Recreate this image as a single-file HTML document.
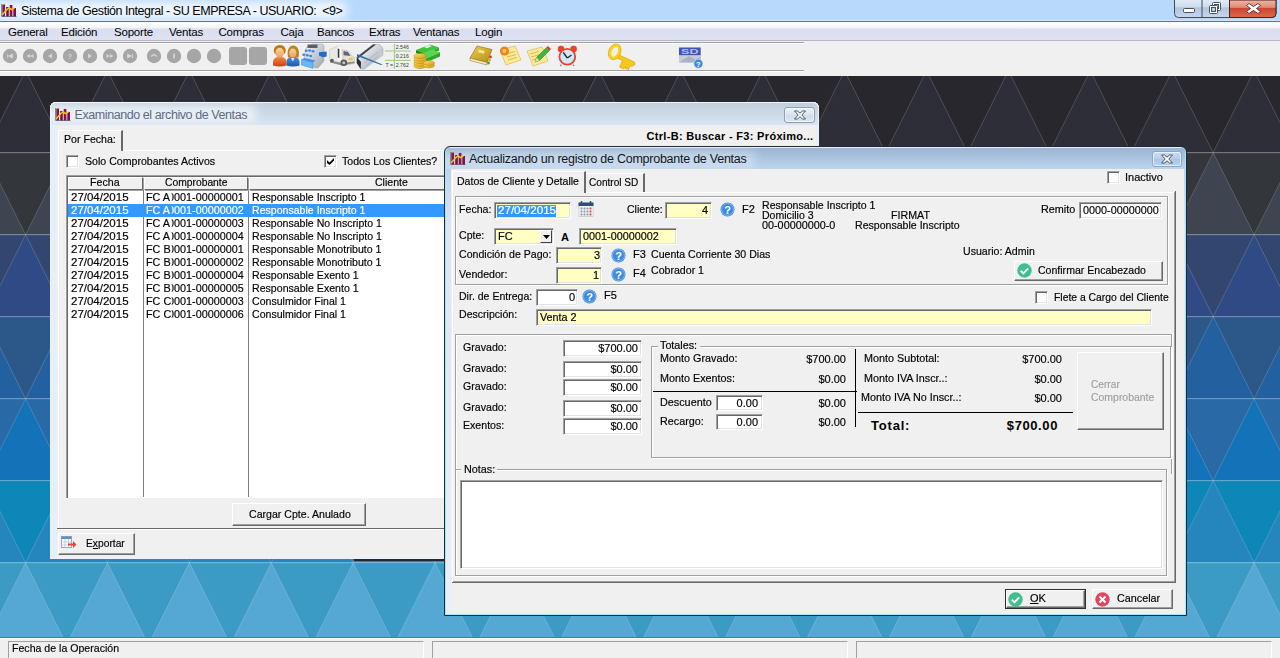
<!DOCTYPE html>
<html lang="es"><head><meta charset="utf-8"><title>Sistema de Gestión Integral</title>
<style>
html,body{margin:0;padding:0;}
body{width:1280px;height:658px;overflow:hidden;position:relative;background:#f0f0f0;font-family:"Liberation Sans",sans-serif;font-size:11px;}
div,.abs,.t{position:absolute;}
.t{white-space:nowrap;}
u{text-decoration:underline;}
</style></head><body>

<svg class="abs" style="left:0;top:76px" width="1280" height="561" viewBox="0 76 1280 561"><rect x="0" y="70.7" width="1280" height="82" fill="#27272d"/><path d="M-56.3 70.7L-15.4 152.7L-97.2 152.7ZM25.6 70.7L66.6 152.7L-15.4 152.7ZM107.5 70.7L148.4 152.7L66.5 152.7ZM189.4 70.7L230.4 152.7L148.4 152.7ZM271.3 70.7L312.2 152.7L230.4 152.7ZM353.2 70.7L394.2 152.7L312.3 152.7ZM435.1 70.7L476.1 152.7L394.2 152.7ZM517.0 70.7L558.0 152.7L476.1 152.7ZM598.9 70.7L639.9 152.7L558.0 152.7ZM680.8 70.7L721.8 152.7L639.9 152.7ZM762.7 70.7L803.7 152.7L721.8 152.7ZM844.6 70.7L885.6 152.7L803.6 152.7ZM926.5 70.7L967.5 152.7L885.6 152.7ZM1008.4 70.7L1049.4 152.7L967.5 152.7ZM1090.3 70.7L1131.2 152.7L1049.3 152.7ZM1172.2 70.7L1213.2 152.7L1131.2 152.7ZM1254.1 70.7L1295.0 152.7L1213.1 152.7Z" fill="#2e2e38"/><path d="M-56.3 70.7L-15.4 152.7L-97.2 152.7ZM25.6 70.7L66.6 152.7L-15.4 152.7ZM107.5 70.7L148.4 152.7L66.5 152.7ZM189.4 70.7L230.4 152.7L148.4 152.7ZM271.3 70.7L312.2 152.7L230.4 152.7ZM353.2 70.7L394.2 152.7L312.3 152.7ZM435.1 70.7L476.1 152.7L394.2 152.7ZM517.0 70.7L558.0 152.7L476.1 152.7ZM598.9 70.7L639.9 152.7L558.0 152.7ZM680.8 70.7L721.8 152.7L639.9 152.7ZM762.7 70.7L803.7 152.7L721.8 152.7ZM844.6 70.7L885.6 152.7L803.6 152.7ZM926.5 70.7L967.5 152.7L885.6 152.7ZM1008.4 70.7L1049.4 152.7L967.5 152.7ZM1090.3 70.7L1131.2 152.7L1049.3 152.7ZM1172.2 70.7L1213.2 152.7L1131.2 152.7ZM1254.1 70.7L1295.0 152.7L1213.1 152.7Z" fill="none" stroke="#fff" stroke-opacity="0.17" stroke-width="1"/><rect x="0" y="152.7" width="1280" height="82" fill="#33363b"/><path d="M-15.3 152.7L25.6 234.7L-56.3 234.7ZM66.6 152.7L107.5 234.7L25.6 234.7ZM148.5 152.7L189.4 234.7L107.5 234.7ZM230.4 152.7L271.3 234.7L189.4 234.7ZM312.2 152.7L353.2 234.7L271.3 234.7ZM394.2 152.7L435.1 234.7L353.2 234.7ZM476.1 152.7L517.0 234.7L435.1 234.7ZM558.0 152.7L598.9 234.7L517.0 234.7ZM639.9 152.7L680.8 234.7L598.9 234.7ZM721.8 152.7L762.7 234.7L680.8 234.7ZM803.7 152.7L844.6 234.7L762.7 234.7ZM885.5 152.7L926.5 234.7L844.6 234.7ZM967.5 152.7L1008.4 234.7L926.5 234.7ZM1049.4 152.7L1090.3 234.7L1008.4 234.7ZM1131.2 152.7L1172.2 234.7L1090.3 234.7ZM1213.2 152.7L1254.1 234.7L1172.2 234.7ZM1295.0 152.7L1336.0 234.7L1254.1 234.7Z" fill="#3e4551"/><path d="M-15.3 152.7L25.6 234.7L-56.3 234.7ZM66.6 152.7L107.5 234.7L25.6 234.7ZM148.5 152.7L189.4 234.7L107.5 234.7ZM230.4 152.7L271.3 234.7L189.4 234.7ZM312.2 152.7L353.2 234.7L271.3 234.7ZM394.2 152.7L435.1 234.7L353.2 234.7ZM476.1 152.7L517.0 234.7L435.1 234.7ZM558.0 152.7L598.9 234.7L517.0 234.7ZM639.9 152.7L680.8 234.7L598.9 234.7ZM721.8 152.7L762.7 234.7L680.8 234.7ZM803.7 152.7L844.6 234.7L762.7 234.7ZM885.5 152.7L926.5 234.7L844.6 234.7ZM967.5 152.7L1008.4 234.7L926.5 234.7ZM1049.4 152.7L1090.3 234.7L1008.4 234.7ZM1131.2 152.7L1172.2 234.7L1090.3 234.7ZM1213.2 152.7L1254.1 234.7L1172.2 234.7ZM1295.0 152.7L1336.0 234.7L1254.1 234.7Z" fill="none" stroke="#fff" stroke-opacity="0.17" stroke-width="1"/><rect x="0" y="234.7" width="1280" height="82" fill="#33466f"/><path d="M-56.3 234.7L-15.4 316.7L-97.2 316.7ZM25.6 234.7L66.6 316.7L-15.4 316.7ZM107.5 234.7L148.4 316.7L66.5 316.7ZM189.4 234.7L230.4 316.7L148.4 316.7ZM271.3 234.7L312.2 316.7L230.4 316.7ZM353.2 234.7L394.2 316.7L312.3 316.7ZM435.1 234.7L476.1 316.7L394.2 316.7ZM517.0 234.7L558.0 316.7L476.1 316.7ZM598.9 234.7L639.9 316.7L558.0 316.7ZM680.8 234.7L721.8 316.7L639.9 316.7ZM762.7 234.7L803.7 316.7L721.8 316.7ZM844.6 234.7L885.6 316.7L803.6 316.7ZM926.5 234.7L967.5 316.7L885.6 316.7ZM1008.4 234.7L1049.4 316.7L967.5 316.7ZM1090.3 234.7L1131.2 316.7L1049.3 316.7ZM1172.2 234.7L1213.2 316.7L1131.2 316.7ZM1254.1 234.7L1295.0 316.7L1213.1 316.7Z" fill="#2f4a85"/><path d="M-56.3 234.7L-15.4 316.7L-97.2 316.7ZM25.6 234.7L66.6 316.7L-15.4 316.7ZM107.5 234.7L148.4 316.7L66.5 316.7ZM189.4 234.7L230.4 316.7L148.4 316.7ZM271.3 234.7L312.2 316.7L230.4 316.7ZM353.2 234.7L394.2 316.7L312.3 316.7ZM435.1 234.7L476.1 316.7L394.2 316.7ZM517.0 234.7L558.0 316.7L476.1 316.7ZM598.9 234.7L639.9 316.7L558.0 316.7ZM680.8 234.7L721.8 316.7L639.9 316.7ZM762.7 234.7L803.7 316.7L721.8 316.7ZM844.6 234.7L885.6 316.7L803.6 316.7ZM926.5 234.7L967.5 316.7L885.6 316.7ZM1008.4 234.7L1049.4 316.7L967.5 316.7ZM1090.3 234.7L1131.2 316.7L1049.3 316.7ZM1172.2 234.7L1213.2 316.7L1131.2 316.7ZM1254.1 234.7L1295.0 316.7L1213.1 316.7Z" fill="none" stroke="#fff" stroke-opacity="0.17" stroke-width="1"/><rect x="0" y="316.7" width="1280" height="82" fill="#2b5789"/><path d="M-15.3 316.7L25.6 398.7L-56.3 398.7ZM66.6 316.7L107.5 398.7L25.6 398.7ZM148.5 316.7L189.4 398.7L107.5 398.7ZM230.4 316.7L271.3 398.7L189.4 398.7ZM312.2 316.7L353.2 398.7L271.3 398.7ZM394.2 316.7L435.1 398.7L353.2 398.7ZM476.1 316.7L517.0 398.7L435.1 398.7ZM558.0 316.7L598.9 398.7L517.0 398.7ZM639.9 316.7L680.8 398.7L598.9 398.7ZM721.8 316.7L762.7 398.7L680.8 398.7ZM803.7 316.7L844.6 398.7L762.7 398.7ZM885.5 316.7L926.5 398.7L844.6 398.7ZM967.5 316.7L1008.4 398.7L926.5 398.7ZM1049.4 316.7L1090.3 398.7L1008.4 398.7ZM1131.2 316.7L1172.2 398.7L1090.3 398.7ZM1213.2 316.7L1254.1 398.7L1172.2 398.7ZM1295.0 316.7L1336.0 398.7L1254.1 398.7Z" fill="#22609f"/><path d="M-15.3 316.7L25.6 398.7L-56.3 398.7ZM66.6 316.7L107.5 398.7L25.6 398.7ZM148.5 316.7L189.4 398.7L107.5 398.7ZM230.4 316.7L271.3 398.7L189.4 398.7ZM312.2 316.7L353.2 398.7L271.3 398.7ZM394.2 316.7L435.1 398.7L353.2 398.7ZM476.1 316.7L517.0 398.7L435.1 398.7ZM558.0 316.7L598.9 398.7L517.0 398.7ZM639.9 316.7L680.8 398.7L598.9 398.7ZM721.8 316.7L762.7 398.7L680.8 398.7ZM803.7 316.7L844.6 398.7L762.7 398.7ZM885.5 316.7L926.5 398.7L844.6 398.7ZM967.5 316.7L1008.4 398.7L926.5 398.7ZM1049.4 316.7L1090.3 398.7L1008.4 398.7ZM1131.2 316.7L1172.2 398.7L1090.3 398.7ZM1213.2 316.7L1254.1 398.7L1172.2 398.7ZM1295.0 316.7L1336.0 398.7L1254.1 398.7Z" fill="none" stroke="#fff" stroke-opacity="0.17" stroke-width="1"/><rect x="0" y="398.7" width="1280" height="82" fill="#2969a5"/><path d="M-56.3 398.7L-15.4 480.7L-97.2 480.7ZM25.6 398.7L66.6 480.7L-15.4 480.7ZM107.5 398.7L148.4 480.7L66.5 480.7ZM189.4 398.7L230.4 480.7L148.4 480.7ZM271.3 398.7L312.2 480.7L230.4 480.7ZM353.2 398.7L394.2 480.7L312.3 480.7ZM435.1 398.7L476.1 480.7L394.2 480.7ZM517.0 398.7L558.0 480.7L476.1 480.7ZM598.9 398.7L639.9 480.7L558.0 480.7ZM680.8 398.7L721.8 480.7L639.9 480.7ZM762.7 398.7L803.7 480.7L721.8 480.7ZM844.6 398.7L885.6 480.7L803.6 480.7ZM926.5 398.7L967.5 480.7L885.6 480.7ZM1008.4 398.7L1049.4 480.7L967.5 480.7ZM1090.3 398.7L1131.2 480.7L1049.3 480.7ZM1172.2 398.7L1213.2 480.7L1131.2 480.7ZM1254.1 398.7L1295.0 480.7L1213.1 480.7Z" fill="#1372b8"/><path d="M-56.3 398.7L-15.4 480.7L-97.2 480.7ZM25.6 398.7L66.6 480.7L-15.4 480.7ZM107.5 398.7L148.4 480.7L66.5 480.7ZM189.4 398.7L230.4 480.7L148.4 480.7ZM271.3 398.7L312.2 480.7L230.4 480.7ZM353.2 398.7L394.2 480.7L312.3 480.7ZM435.1 398.7L476.1 480.7L394.2 480.7ZM517.0 398.7L558.0 480.7L476.1 480.7ZM598.9 398.7L639.9 480.7L558.0 480.7ZM680.8 398.7L721.8 480.7L639.9 480.7ZM762.7 398.7L803.7 480.7L721.8 480.7ZM844.6 398.7L885.6 480.7L803.6 480.7ZM926.5 398.7L967.5 480.7L885.6 480.7ZM1008.4 398.7L1049.4 480.7L967.5 480.7ZM1090.3 398.7L1131.2 480.7L1049.3 480.7ZM1172.2 398.7L1213.2 480.7L1131.2 480.7ZM1254.1 398.7L1295.0 480.7L1213.1 480.7Z" fill="none" stroke="#fff" stroke-opacity="0.17" stroke-width="1"/><rect x="0" y="480.7" width="1280" height="82" fill="#0f86b8"/><path d="M-15.3 480.7L25.6 562.7L-56.3 562.7ZM66.6 480.7L107.5 562.7L25.6 562.7ZM148.5 480.7L189.4 562.7L107.5 562.7ZM230.4 480.7L271.3 562.7L189.4 562.7ZM312.2 480.7L353.2 562.7L271.3 562.7ZM394.2 480.7L435.1 562.7L353.2 562.7ZM476.1 480.7L517.0 562.7L435.1 562.7ZM558.0 480.7L598.9 562.7L517.0 562.7ZM639.9 480.7L680.8 562.7L598.9 562.7ZM721.8 480.7L762.7 562.7L680.8 562.7ZM803.7 480.7L844.6 562.7L762.7 562.7ZM885.5 480.7L926.5 562.7L844.6 562.7ZM967.5 480.7L1008.4 562.7L926.5 562.7ZM1049.4 480.7L1090.3 562.7L1008.4 562.7ZM1131.2 480.7L1172.2 562.7L1090.3 562.7ZM1213.2 480.7L1254.1 562.7L1172.2 562.7ZM1295.0 480.7L1336.0 562.7L1254.1 562.7Z" fill="#2585bd"/><path d="M-15.3 480.7L25.6 562.7L-56.3 562.7ZM66.6 480.7L107.5 562.7L25.6 562.7ZM148.5 480.7L189.4 562.7L107.5 562.7ZM230.4 480.7L271.3 562.7L189.4 562.7ZM312.2 480.7L353.2 562.7L271.3 562.7ZM394.2 480.7L435.1 562.7L353.2 562.7ZM476.1 480.7L517.0 562.7L435.1 562.7ZM558.0 480.7L598.9 562.7L517.0 562.7ZM639.9 480.7L680.8 562.7L598.9 562.7ZM721.8 480.7L762.7 562.7L680.8 562.7ZM803.7 480.7L844.6 562.7L762.7 562.7ZM885.5 480.7L926.5 562.7L844.6 562.7ZM967.5 480.7L1008.4 562.7L926.5 562.7ZM1049.4 480.7L1090.3 562.7L1008.4 562.7ZM1131.2 480.7L1172.2 562.7L1090.3 562.7ZM1213.2 480.7L1254.1 562.7L1172.2 562.7ZM1295.0 480.7L1336.0 562.7L1254.1 562.7Z" fill="none" stroke="#fff" stroke-opacity="0.17" stroke-width="1"/><rect x="0" y="562.7" width="1280" height="82" fill="#3c9bc5"/><path d="M-56.3 562.7L-15.4 644.7L-97.2 644.7ZM25.6 562.7L66.6 644.7L-15.4 644.7ZM107.5 562.7L148.4 644.7L66.5 644.7ZM189.4 562.7L230.4 644.7L148.4 644.7ZM271.3 562.7L312.2 644.7L230.4 644.7ZM353.2 562.7L394.2 644.7L312.3 644.7ZM435.1 562.7L476.1 644.7L394.2 644.7ZM517.0 562.7L558.0 644.7L476.1 644.7ZM598.9 562.7L639.9 644.7L558.0 644.7ZM680.8 562.7L721.8 644.7L639.9 644.7ZM762.7 562.7L803.7 644.7L721.8 644.7ZM844.6 562.7L885.6 644.7L803.6 644.7ZM926.5 562.7L967.5 644.7L885.6 644.7ZM1008.4 562.7L1049.4 644.7L967.5 644.7ZM1090.3 562.7L1131.2 644.7L1049.3 644.7ZM1172.2 562.7L1213.2 644.7L1131.2 644.7ZM1254.1 562.7L1295.0 644.7L1213.1 644.7Z" fill="#55a8d4"/><path d="M-56.3 562.7L-15.4 644.7L-97.2 644.7ZM25.6 562.7L66.6 644.7L-15.4 644.7ZM107.5 562.7L148.4 644.7L66.5 644.7ZM189.4 562.7L230.4 644.7L148.4 644.7ZM271.3 562.7L312.2 644.7L230.4 644.7ZM353.2 562.7L394.2 644.7L312.3 644.7ZM435.1 562.7L476.1 644.7L394.2 644.7ZM517.0 562.7L558.0 644.7L476.1 644.7ZM598.9 562.7L639.9 644.7L558.0 644.7ZM680.8 562.7L721.8 644.7L639.9 644.7ZM762.7 562.7L803.7 644.7L721.8 644.7ZM844.6 562.7L885.6 644.7L803.6 644.7ZM926.5 562.7L967.5 644.7L885.6 644.7ZM1008.4 562.7L1049.4 644.7L967.5 644.7ZM1090.3 562.7L1131.2 644.7L1049.3 644.7ZM1172.2 562.7L1213.2 644.7L1131.2 644.7ZM1254.1 562.7L1295.0 644.7L1213.1 644.7Z" fill="none" stroke="#fff" stroke-opacity="0.17" stroke-width="1"/><path d="M0 152.7H1280" stroke="#fff" stroke-opacity="0.3" stroke-width="1"/><path d="M0 234.7H1280" stroke="#fff" stroke-opacity="0.3" stroke-width="1"/><path d="M0 316.7H1280" stroke="#fff" stroke-opacity="0.3" stroke-width="1"/><path d="M0 398.7H1280" stroke="#fff" stroke-opacity="0.3" stroke-width="1"/><path d="M0 480.7H1280" stroke="#fff" stroke-opacity="0.3" stroke-width="1"/><path d="M0 562.7H1280" stroke="#fff" stroke-opacity="0.3" stroke-width="1"/></svg>
<div style="left:0px;top:0px;width:1280px;height:21px;background:#b9d9fb;overflow:hidden;box-shadow:inset 0 -1px 0 #d6e6f8;"><div style="left:-12px;top:2px;width:358px;height:17px;background:rgba(255,255,255,.8);filter:blur(5px);"></div></div>
<div style="left:0px;top:21px;width:1280px;height:1px;background:#66717f;"></div>
<svg class="abs" style="left:1px;top:4px" width="16" height="14" viewBox="0 0 16 14">
<path d="M0.500 0V12.500H15.500" stroke="#7d8c94" stroke-width="1" fill="none"/>
<rect x="1.300" y="0.500" width="2.700" height="12" fill="#8a163e"/><rect x="5.200" y="3" width="2.600" height="9.500" fill="#7a1238"/><rect x="8.700" y="1" width="2.700" height="11.500" fill="#8a163e"/><rect x="12.300" y="4" width="2.700" height="8.500" fill="#7a1446"/>
<path d="M1 11L5 6.500 8 3.800 10.500 5.500 13.500 3.800" stroke="#f2c230" stroke-width="1.500" fill="none"/></svg>
<span class="t" style="top:4.17px;font-size:12.5px;line-height:15px;color:#000;left:21px;letter-spacing:-0.45px;">Sistema de Gestión Integral - SU EMPRESA - USUARIO:&nbsp; &lt;9&gt;</span>
<svg class="abs" style="left:1173px;top:0" width="106" height="19" viewBox="0 0 106 19">
<defs><linearGradient id="wb" x1="0" y1="0" x2="0" y2="1"><stop offset="0" stop-color="#e3ecf7"/><stop offset="0.42" stop-color="#cfdcec"/><stop offset="0.48" stop-color="#b2c5dd"/><stop offset="1" stop-color="#c6d7ec"/></linearGradient>
<linearGradient id="wr" x1="0" y1="0" x2="0" y2="1"><stop offset="0" stop-color="#f0b4a6"/><stop offset="0.42" stop-color="#e08a78"/><stop offset="0.48" stop-color="#cc4630"/><stop offset="1" stop-color="#dc6a4c"/></linearGradient></defs>
<path d="M1.500 -1V13.500a4 4 0 0 0 4 4H99a4 4 0 0 0 4-4V-1Z" fill="url(#wb)" stroke="#3f4a58" />
<path d="M56.500 0V17.500H99a4 4 0 0 0 4-4V0Z" fill="url(#wr)" stroke="#43201c"/>
<path d="M29 0V17.500" stroke="#3f4a58"/>
<rect x="10.500" y="8.500" width="11" height="4" rx="1" fill="#fff" stroke="#47535f"/>
<rect x="39.500" y="2.500" width="8" height="8" rx="1" fill="#fff" stroke="#47535f"/><rect x="41.500" y="4.500" width="4" height="4" fill="#b9cbe0" stroke="#47535f"/>
<rect x="36.500" y="5.500" width="8" height="8" rx="1" fill="#fff" stroke="#47535f"/><rect x="38.500" y="7.500" width="4" height="4" fill="#b9cbe0" stroke="#47535f"/>
<path d="M76 3.500l4.500 3 4.500-3 2.500 2-4 3 4 3-2.500 2-4.500-3-4.500 3-2.500-2 4-3-4-3z" fill="#fff" stroke="#5a2a24" stroke-width="0.900"/>
</svg>
<div style="left:0px;top:22px;width:1280px;height:18px;background:linear-gradient(#ffffff 0,#f4f5fa 30%,#e6e8f3 36%,#dbdeee 42%,#dfe2f2 100%);"></div>
<div style="left:0px;top:40px;width:1280px;height:1px;background:#b4b7c2;"></div>
<div style="left:0px;top:41px;width:1280px;height:35px;background:#f0f0f0;"></div>
<div style="left:0px;top:42px;width:804px;height:1px;background:#a0a0a0;"></div>
<div style="left:0px;top:43px;width:804px;height:1px;background:#fff;"></div>
<div style="left:0px;top:70px;width:804px;height:1px;background:#a0a0a0;"></div>
<div style="left:0px;top:71px;width:804px;height:1px;background:#fff;"></div>
<span class="t" style="top:25.02px;font-size:11.5px;line-height:14px;color:#000;left:8px;letter-spacing:-0.2px;">General</span>
<span class="t" style="top:25.02px;font-size:11.5px;line-height:14px;color:#000;left:61px;letter-spacing:-0.2px;">Edición</span>
<span class="t" style="top:25.02px;font-size:11.5px;line-height:14px;color:#000;left:114px;letter-spacing:-0.2px;">Soporte</span>
<span class="t" style="top:25.02px;font-size:11.5px;line-height:14px;color:#000;left:169px;letter-spacing:-0.2px;">Ventas</span>
<span class="t" style="top:25.02px;font-size:11.5px;line-height:14px;color:#000;left:218.5px;letter-spacing:-0.2px;">Compras</span>
<span class="t" style="top:25.02px;font-size:11.5px;line-height:14px;color:#000;left:280.5px;letter-spacing:-0.2px;">Caja</span>
<span class="t" style="top:25.02px;font-size:11.5px;line-height:14px;color:#000;left:317px;letter-spacing:-0.2px;">Bancos</span>
<span class="t" style="top:25.02px;font-size:11.5px;line-height:14px;color:#000;left:369px;letter-spacing:-0.2px;">Extras</span>
<span class="t" style="top:25.02px;font-size:11.5px;line-height:14px;color:#000;left:413px;letter-spacing:-0.2px;">Ventanas</span>
<span class="t" style="top:25.02px;font-size:11.5px;line-height:14px;color:#000;left:475px;letter-spacing:-0.2px;">Login</span>
<svg class="abs" style="left:0;top:42px" width="804" height="30" viewBox="0 42 804 30"><circle cx="10" cy="56" r="7.200" fill="#a6a6a6"/><circle cx="30" cy="56" r="7.200" fill="#a6a6a6"/><circle cx="50" cy="56" r="7.200" fill="#a6a6a6"/><circle cx="70" cy="56" r="7.200" fill="#a6a6a6"/><circle cx="90" cy="56" r="7.200" fill="#a6a6a6"/><circle cx="110" cy="56" r="7.200" fill="#a6a6a6"/><circle cx="130" cy="56" r="7.200" fill="#a6a6a6"/><circle cx="154" cy="56" r="7.200" fill="#a6a6a6"/><circle cx="174" cy="56" r="7.200" fill="#a6a6a6"/><circle cx="194" cy="56" r="7.200" fill="#a6a6a6"/><circle cx="214" cy="56" r="7.200" fill="#a6a6a6"/><path d="M7.500 54v4M8.500 56l4-2v4z" fill="#d6d6d6" stroke="#d6d6d6" stroke-width="0.800"/><path d="M26.500 56l3.500-2v4zM30 56l3.500-2v4z" fill="#d6d6d6"/><path d="M48 56l4-2.500v5z" fill="#d6d6d6"/><text x="70" y="58.500" font-size="7" font-weight="bold" font-family="Liberation Sans, sans-serif" text-anchor="middle" fill="#d6d6d6">?</text><path d="M92 56l-4-2.500v5z" fill="#d6d6d6"/><path d="M113.500 56l-3.500-2v4zM110 56l-3.500-2v4z" fill="#d6d6d6"/><path d="M132.500 54v4M131.500 56l-4-2v4z" fill="#d6d6d6" stroke="#d6d6d6" stroke-width="0.800"/><path d="M151 56.500l3-2 3 2" fill="none" stroke="#d6d6d6" stroke-width="1.400"/><path d="M174 53.500v5" stroke="#d6d6d6" stroke-width="1.600"/><rect x="229" y="47" width="18" height="18" rx="3" fill="#a6a6a6"/><rect x="249" y="47" width="18" height="18" rx="3" fill="#a6a6a6"/><defs><linearGradient id="gOr" x1="0" y1="0" x2="0" y2="1"><stop offset="0" stop-color="#f08a3c"/><stop offset="1" stop-color="#d63a1c"/></linearGradient><linearGradient id="gBl" x1="0" y1="0" x2="0" y2="1"><stop offset="0" stop-color="#4a90e0"/><stop offset="1" stop-color="#1c55b0"/></linearGradient><linearGradient id="gSk" x1="0" y1="0" x2="0" y2="1"><stop offset="0" stop-color="#fbd09a"/><stop offset="1" stop-color="#f0a060"/></linearGradient><linearGradient id="gGy" x1="0" y1="0" x2="1" y2="1"><stop offset="0" stop-color="#f4f6f8"/><stop offset="1" stop-color="#9aa4b0"/></linearGradient><linearGradient id="gGd" x1="0" y1="0" x2="1" y2="1"><stop offset="0" stop-color="#fbe26a"/><stop offset="1" stop-color="#d79a10"/></linearGradient><linearGradient id="gGn" x1="0" y1="0" x2="0" y2="1"><stop offset="0" stop-color="#5fd64a"/><stop offset="1" stop-color="#1f9a22"/></linearGradient><linearGradient id="gBk" x1="0" y1="0" x2="1" y2="1"><stop offset="0" stop-color="#ecd050"/><stop offset="1" stop-color="#b48c14"/></linearGradient></defs><g><path d="M273 65.500v-3.500c0-3 2.500-5 6-5h1.500c3.500 0 6 2 6 5v3.500c-4 1.200-9.500 1.200-13.500 0z" fill="url(#gOr)"/><path d="M274 52c-1-4 2-7 5.800-7s6.700 3 5.700 7l-1 2h-9.500z" fill="#b07c16"/><ellipse cx="279.700" cy="52.800" rx="4.300" ry="5" fill="url(#gSk)"/><path d="M286.500 65.500v-3.500c0-3 2.500-5 5.500-5h2c3 0 5.500 2 5.500 5v3.500c-4 1.200-9 1.200-13 0z" fill="url(#gBl)"/><path d="M288 57.500c-1.500-8 1.500-12 5.200-12s7 4 5.300 12z" fill="#b8861c"/><ellipse cx="292.800" cy="53" rx="3.600" ry="4.600" fill="url(#gSk)"/><path d="M291 58l1.800 3.500 1.800-3.500z" fill="#dfeaf8"/></g><g><path d="M304 59l2-11 6-4h11l1 2v15l-6 7h-3z" fill="url(#gGy)" stroke="#9aa2ae" stroke-width="0.500"/><path d="M307.500 44.500h10v3.500h-10z" fill="#5a5f68"/><path d="M301.500 59.500l11.500 3v6l-11.500-3.500z" fill="#6ab6f6" stroke="#3a86d8" stroke-width="0.500"/><path d="M301.500 59.500l3-1.500 11 2.500-2.500 2z" fill="#3f92e6"/><g fill="#3a8ae2"><ellipse cx="306.200" cy="50.800" rx="1.500" ry="1.200"/><ellipse cx="309.600" cy="50.500" rx="1.500" ry="1.200"/><ellipse cx="313" cy="51.200" rx="1.500" ry="1.200"/><ellipse cx="303.800" cy="54.800" rx="1.500" ry="1.200"/><ellipse cx="307.200" cy="55.300" rx="1.500" ry="1.200"/><ellipse cx="310.600" cy="56" rx="1.500" ry="1.200"/></g><path d="M319 52.300l7.700-.8v5l-4 .8-3.700-1.800z" fill="#1f6ccc"/></g><g><path d="M329.500 49.500l8-3 5 1v13.500l-8.500 1.500-4.500-2z" fill="#e9e8e2" stroke="#c2c0b6" stroke-width="0.500"/><path d="M337.500 46.500l5 1 1 .5v14l-6-1z" fill="#f5f4f0"/><path d="M337.800 48.500v9l1.500.5v-9z" fill="#2c3440"/><path d="M342 49.500l6.500 1.500 3.500 5 2.500 1.500v6l-11 2z" fill="#e4e2da" stroke="#b6b2a4" stroke-width="0.500"/><path d="M343.500 51l4.500 1 2.500 4-7-.8z" fill="#5a6a7c"/><path d="M330 60.500l12 2.500 12.500-1.500v1.500l-12.500 2.500-12-3z" fill="#8a8a86"/><circle cx="343.800" cy="62.800" r="3.300" fill="#5a5a5a"/><circle cx="343.800" cy="62.800" r="1.500" fill="#c8c8c8"/><circle cx="332" cy="60.500" r="1.800" fill="#5a5a5a"/><path d="M349 58l3.500-.5.500 2.500-4 .5z" fill="#f0c830"/></g><defs><linearGradient id="gMt" x1="0" y1="0" x2="1" y2="1"><stop offset="0" stop-color="#4a5058"/><stop offset="0.250" stop-color="#e8ecf0"/><stop offset="0.600" stop-color="#c2c8d0"/><stop offset="1" stop-color="#f4f6f8"/></linearGradient></defs><g><path d="M373 44.500h6.700l3.300 4.200v6.300L364.500 69h-3.800l-3.900-6v-6z" fill="url(#gMt)" stroke="#8a929e" stroke-width="0.400"/><path d="M356.800 57l16.200-12.500h3L358 58.500z" fill="#3c424a"/><path d="M356.800 57v6l3.900 6 .3-7z" fill="#2a2e34"/><path d="M364 63l14-11M366 66l14-11" stroke="#9aa2ae" stroke-width="0.600"/><path d="M357 54l25.500 10.500-1.500.5L357 56z" fill="#2f6ea8"/></g><g font-family="Liberation Sans, sans-serif" font-size="5.200" fill="#3a3a3a"><path d="M385 51H410.600M385 60.400H410.600M394.400 44V69" stroke="#8cc870" stroke-width="0.900"/><text x="395.800" y="49">2.546</text><text x="395.800" y="57.600">0.216</text><text x="385.600" y="66.700">T =</text><text x="395.800" y="66.700">2.762</text></g><g><path d="M416 50l14-5.500 9 3-14 6z" fill="#3fc43a"/><path d="M416 50v3l9 3.500v-3z" fill="#1d8a20"/><path d="M425 53.500l14-6v3l-14 6z" fill="#2aa82c"/><path d="M418 55l14-5.500 8 3-14 6z" fill="#58d650"/><path d="M426 58.500l14-6v4l-14 6z" fill="#2aa82c"/><path d="M424 47l5-2 3 1-5 2.200z" fill="#e8f0e8"/><g fill="url(#gGd)" stroke="#b8860b" stroke-width="0.500"><ellipse cx="420" cy="66" rx="6" ry="2.600"/><ellipse cx="420" cy="63.500" rx="6" ry="2.600"/><ellipse cx="420" cy="61" rx="6" ry="2.600"/><ellipse cx="420" cy="58.500" rx="6" ry="2.600"/><ellipse cx="420" cy="56" rx="6" ry="2.600"/><ellipse cx="429" cy="65.500" rx="5.500" ry="2.400"/><ellipse cx="429" cy="63" rx="5.500" ry="2.400"/></g></g><g><path d="M470 58l7-12 15 3.500-5 13z" fill="url(#gBk)" stroke="#8a6808" stroke-width="0.600"/><path d="M470 58l17 4.500v2.500l-17-4.500z" fill="#f4ecd0" stroke="#8a6808" stroke-width="0.500"/><rect x="478.500" y="50" width="6" height="3" fill="#f3e3a0" transform="rotate(14 481 51)"/><circle cx="490.500" cy="57" r="1.400" fill="#e03a2a"/><circle cx="489.500" cy="60" r="1.400" fill="#f0a020"/><circle cx="488.500" cy="63" r="1.400" fill="#3aa83a"/></g><g><path d="M500 50l15-4 6 14-15 5z" fill="#fbeb96" stroke="#d8b040" stroke-width="0.600"/><path d="M506 54l9-2.500M507 57l9-2.500M508 60l9-2.500" stroke="#d8a840" stroke-width="0.800"/><circle cx="504.500" cy="51" r="4.600" fill="#f0802a"/><circle cx="504.500" cy="51" r="2" fill="#fbd040"/></g><g><path d="M527 51l15-4 6 14-15 5z" fill="#fbeb96" stroke="#d8b040" stroke-width="0.600"/><path d="M530 54l9-2.500M531 57l9-2.500M532 60l7-2" stroke="#d8a840" stroke-width="0.800"/><path d="M535 62l1.500-4.500 10-10 3 3-10 10z" fill="#3fb83a" stroke="#1d7a20" stroke-width="0.500"/><path d="M546.500 47.500l1.500-1.500 3 3-1.500 1.500z" fill="#e03a2a"/><path d="M535 62l1.500-4.500 3 3z" fill="#f0d0a0"/></g><g><circle cx="561" cy="49" r="3.300" fill="#e8432c"/><circle cx="573.600" cy="49" r="3.300" fill="#e8432c"/><path d="M561.500 64.500l-1.200 1.600M573 64.500l1.200 1.600" stroke="#9a9a9a" stroke-width="1.400"/><circle cx="567.300" cy="56.800" r="8.800" fill="#e8432c"/><circle cx="567.300" cy="56.800" r="7" fill="#cfe8fb"/><path d="M567.300 58l-4-5.500M567.300 58l4.200-3" stroke="#1c2430" stroke-width="1.300" fill="none"/></g><g><path d="M618 54.500l16.500 7.500.5 2.500-3.500 2-1-1.500-2 4.500-3-1 .5-2-2.500 2.500-4-2 3-6.500-7-3z" fill="#f7c815" stroke="#d99a06" stroke-width="0.600"/><ellipse cx="614.700" cy="51.800" rx="4.500" ry="6.700" transform="rotate(24 614.700 51.800)" fill="none" stroke="#f9d21c" stroke-width="3"/><ellipse cx="614.700" cy="51.800" rx="6" ry="8.200" transform="rotate(24 614.700 51.800)" fill="none" stroke="#dfa008" stroke-width="0.600"/></g><g><rect x="679" y="47.500" width="21.700" height="8" fill="#3f55b2"/><rect x="679" y="55.500" width="21.700" height="7" fill="#c6cbd8"/><path d="M679 62.500l10-6.500 6 3.500 5.700-3v6z" fill="#aab2c4"/><text x="681" y="54.300" font-family="Liberation Sans, sans-serif" font-size="7.500" font-weight="bold" fill="#b4c0f0" textLength="17.500" lengthAdjust="spacingAndGlyphs">SD</text><circle cx="698.400" cy="63.700" r="4.600" fill="#3f88e0" stroke="#dfeafb" stroke-width="0.700"/><text x="698.400" y="66.500" font-family="Liberation Sans, sans-serif" font-size="7.500" font-weight="bold" fill="#fff" text-anchor="middle">?</text></g></svg>
<div style="left:0px;top:637px;width:1280px;height:1px;background:#3f7f9c;"></div>
<div style="left:0px;top:638px;width:1280px;height:20px;background:#f0f0f0;"></div>
<div style="left:0px;top:638px;width:1280px;height:1px;background:#fff;"></div>
<div style="left:8px;top:641px;width:416px;height:17px;border-top:1px solid #a0a0a0;border-left:1px solid #a0a0a0;border-right:1px solid #fff;box-sizing:border-box;"></div>
<div style="left:432px;top:641px;width:416px;height:17px;border-top:1px solid #a0a0a0;border-left:1px solid #a0a0a0;border-right:1px solid #fff;box-sizing:border-box;"></div>
<div style="left:856px;top:641px;width:416px;height:17px;border-top:1px solid #a0a0a0;border-left:1px solid #a0a0a0;border-right:1px solid #fff;box-sizing:border-box;"></div>
<span class="t" style="top:641.41px;font-size:11.8px;line-height:14px;color:#000;left:11.5px;transform:scaleX(0.8970);transform-origin:left center;-webkit-text-stroke:0.18px;">Fecha de la Operación</span>
<div style="left:50px;top:102px;width:769px;height:457px;background:#e6eef8;border-radius:6px 6px 0 0;box-shadow:inset 0 0 0 1px #eef3fa;"></div>
<div style="left:50px;top:102px;width:769px;height:23px;background:linear-gradient(#c0cedc,#d8e5f3);border-radius:6px 6px 0 0;box-shadow:inset 0 1px 0 #f2f6fb,inset 1px 0 0 #eef3f9,inset -1px 0 0 #eef3f9;overflow:hidden;"><div style="left:-4px;top:3px;width:210px;height:17px;background:rgba(255,255,255,.6);filter:blur(5px);"></div></div>
<div style="left:57px;top:125px;width:760px;height:433px;background:#f0f0f0;"></div>
<svg class="abs" style="left:55px;top:107.5px" width="16" height="14" viewBox="0 0 16 14">
<path d="M0.500 0V12.500H15.500" stroke="#7d8c94" stroke-width="1" fill="none"/>
<rect x="1.300" y="0.500" width="2.700" height="12" fill="#8a163e"/><rect x="5.200" y="3" width="2.600" height="9.500" fill="#7a1238"/><rect x="8.700" y="1" width="2.700" height="11.500" fill="#8a163e"/><rect x="12.300" y="4" width="2.700" height="8.500" fill="#7a1446"/>
<path d="M1 11L5 6.500 8 3.800 10.500 5.500 13.500 3.800" stroke="#f2c230" stroke-width="1.500" fill="none"/></svg>
<span class="t" style="top:107.67px;font-size:12.5px;line-height:15px;color:#5b6b82;left:74.5px;letter-spacing:-0.42px;">Examinando el archivo de Ventas</span>
<div style="left:784px;top:107px;width:31px;height:16px;background:linear-gradient(#e9f0f8,#dbe6f3 45%,#cfdcec 50%,#dbe6f3);border:1px solid #8d9db2;border-radius:3px;box-sizing:border-box;box-shadow:inset 0 0 0 1px rgba(255,255,255,.6);"></div>
<svg class="abs" style="left:792.5px;top:110.0px" width="14" height="10" viewBox="0 0 14 10"><path d="M1.500 1h3l2.500 2.200L9.500 1h3L8.800 5l3.700 4h-3L7 6.800 4.500 9h-3L5.200 5z" fill="#fff" stroke="#4a5564" stroke-width="1"/></svg>
<div style="left:58px;top:130px;width:65px;height:21px;border-left:1px solid #fff;border-top:1px solid #fff;border-right:2px solid #696969;box-sizing:border-box;background:#f0f0f0;"></div>
<span class="t" style="top:132.41px;font-size:11.8px;line-height:14px;color:#000;left:63.5px;transform:scaleX(0.8975);transform-origin:left center;-webkit-text-stroke:0.18px;">Por Fecha:</span>
<div style="left:123px;top:150px;width:694px;height:1px;background:#fff;"></div>
<div style="left:58px;top:151px;width:1px;height:377px;background:#fff;"></div>
<span class="t" style="top:129.69px;font-size:11px;line-height:13px;color:#000;left:413.5px;width:400px;text-align:right;letter-spacing:0.32px;font-weight:bold;">Ctrl-B: Buscar - F3: Próximo...</span>
<div style="left:66px;top:155px;width:13px;height:13px;background:#fff;border-top:1px solid #a0a0a0;border-left:1px solid #a0a0a0;border-right:1px solid #fff;border-bottom:1px solid #fff;box-sizing:border-box;box-shadow:inset 1px 1px 0 #696969,inset -1px -1px 0 #e3e3e3;"></div>
<span class="t" style="top:154.41px;font-size:11.8px;line-height:14px;color:#000;left:84.5px;transform:scaleX(0.8977);transform-origin:left center;-webkit-text-stroke:0.18px;">Solo Comprobantes Activos</span>
<div style="left:324px;top:155px;width:13px;height:13px;background:#fff;border-top:1px solid #a0a0a0;border-left:1px solid #a0a0a0;border-right:1px solid #fff;border-bottom:1px solid #fff;box-sizing:border-box;box-shadow:inset 1px 1px 0 #696969,inset -1px -1px 0 #e3e3e3;"></div>
<svg class="abs" style="left:327px;top:158px" width="7" height="7" viewBox="0 0 7 7"><path d="M0 2v3l2.500 2L7 2.500v-2.500L2.500 4.500z" fill="#000"/></svg>
<span class="t" style="top:154.41px;font-size:11.8px;line-height:14px;color:#000;left:342px;transform:scaleX(0.8964);transform-origin:left center;-webkit-text-stroke:0.18px;">Todos Los Clientes?</span>
<div style="left:66px;top:175px;width:400px;height:323px;background:#fff;border-top:1px solid #a0a0a0;border-left:1px solid #a0a0a0;box-sizing:border-box;box-shadow:inset 1px 1px 0 #696969;"></div>
<div style="left:68px;top:177px;width:75px;height:13px;background:#f0f0f0;border-top:1px solid #fff;border-left:1px solid #fff;border-right:1px solid #696969;border-bottom:1px solid #696969;box-sizing:border-box;box-shadow:1px 1px 0 #a0a0a0;"></div>
<div style="left:144px;top:177px;width:104px;height:13px;background:#f0f0f0;border-top:1px solid #fff;border-left:1px solid #fff;border-right:1px solid #696969;border-bottom:1px solid #696969;box-sizing:border-box;box-shadow:1px 1px 0 #a0a0a0;"></div>
<div style="left:249px;top:177px;width:311px;height:13px;background:#f0f0f0;border-top:1px solid #fff;border-left:1px solid #fff;border-right:1px solid #696969;border-bottom:1px solid #696969;box-sizing:border-box;box-shadow:1px 1px 0 #a0a0a0;"></div>
<span class="t" style="top:175.41px;font-size:11.8px;line-height:14px;color:#000;left:90px;transform:scaleX(0.9017);transform-origin:left center;-webkit-text-stroke:0.18px;">Fecha</span>
<span class="t" style="top:175.41px;font-size:11.8px;line-height:14px;color:#000;left:164.5px;transform:scaleX(0.8737);transform-origin:left center;-webkit-text-stroke:0.18px;">Comprobante</span>
<span class="t" style="top:175.41px;font-size:11.8px;line-height:14px;color:#000;left:375px;transform:scaleX(0.8941);transform-origin:left center;-webkit-text-stroke:0.18px;">Cliente</span>
<div style="left:143px;top:190px;width:1px;height:307px;background:#808080;"></div>
<div style="left:248px;top:190px;width:1px;height:307px;background:#808080;"></div>
<span class="t" style="top:190.41px;font-size:11.8px;line-height:14px;color:#000;left:71px;transform:scaleX(0.9745);transform-origin:left center;-webkit-text-stroke:0.18px;">27/04/2015</span>
<span class="t" style="top:190.41px;font-size:11.8px;line-height:14px;color:#000;left:146px;transform:scaleX(0.9170);transform-origin:left center;-webkit-text-stroke:0.18px;">FC A</span>
<span class="t" style="top:190.41px;font-size:11.8px;line-height:14px;color:#000;left:168px;transform:scaleX(0.9165);transform-origin:left center;-webkit-text-stroke:0.18px;clip-path:inset(0 0 0 4px);">0001-00000001</span>
<span class="t" style="top:190.41px;font-size:11.8px;line-height:14px;color:#000;left:252px;transform:scaleX(0.8959);transform-origin:left center;-webkit-text-stroke:0.18px;">Responsable Inscripto 1</span>
<div style="left:68px;top:204px;width:400px;height:13px;background:#3399ff;"></div>
<span class="t" style="top:203.41px;font-size:11.8px;line-height:14px;color:#fff;left:71px;transform:scaleX(0.9745);transform-origin:left center;-webkit-text-stroke:0.18px;">27/04/2015</span>
<span class="t" style="top:203.41px;font-size:11.8px;line-height:14px;color:#fff;left:146px;transform:scaleX(0.9170);transform-origin:left center;-webkit-text-stroke:0.18px;">FC A</span>
<span class="t" style="top:203.41px;font-size:11.8px;line-height:14px;color:#fff;left:168px;transform:scaleX(0.9165);transform-origin:left center;-webkit-text-stroke:0.18px;clip-path:inset(0 0 0 4px);">0001-00000002</span>
<span class="t" style="top:203.41px;font-size:11.8px;line-height:14px;color:#fff;left:252px;transform:scaleX(0.8959);transform-origin:left center;-webkit-text-stroke:0.18px;">Responsable Inscripto 1</span>
<span class="t" style="top:216.41px;font-size:11.8px;line-height:14px;color:#000;left:71px;transform:scaleX(0.9745);transform-origin:left center;-webkit-text-stroke:0.18px;">27/04/2015</span>
<span class="t" style="top:216.41px;font-size:11.8px;line-height:14px;color:#000;left:146px;transform:scaleX(0.9170);transform-origin:left center;-webkit-text-stroke:0.18px;">FC A</span>
<span class="t" style="top:216.41px;font-size:11.8px;line-height:14px;color:#000;left:168px;transform:scaleX(0.9165);transform-origin:left center;-webkit-text-stroke:0.18px;clip-path:inset(0 0 0 4px);">0001-00000003</span>
<span class="t" style="top:216.41px;font-size:11.8px;line-height:14px;color:#000;left:252px;transform:scaleX(0.8963);transform-origin:left center;-webkit-text-stroke:0.18px;">Responsable No Inscripto 1</span>
<span class="t" style="top:229.41px;font-size:11.8px;line-height:14px;color:#000;left:71px;transform:scaleX(0.9745);transform-origin:left center;-webkit-text-stroke:0.18px;">27/04/2015</span>
<span class="t" style="top:229.41px;font-size:11.8px;line-height:14px;color:#000;left:146px;transform:scaleX(0.9170);transform-origin:left center;-webkit-text-stroke:0.18px;">FC A</span>
<span class="t" style="top:229.41px;font-size:11.8px;line-height:14px;color:#000;left:168px;transform:scaleX(0.9165);transform-origin:left center;-webkit-text-stroke:0.18px;clip-path:inset(0 0 0 4px);">0001-00000004</span>
<span class="t" style="top:229.41px;font-size:11.8px;line-height:14px;color:#000;left:252px;transform:scaleX(0.8963);transform-origin:left center;-webkit-text-stroke:0.18px;">Responsable No Inscripto 1</span>
<span class="t" style="top:242.41px;font-size:11.8px;line-height:14px;color:#000;left:71px;transform:scaleX(0.9745);transform-origin:left center;-webkit-text-stroke:0.18px;">27/04/2015</span>
<span class="t" style="top:242.41px;font-size:11.8px;line-height:14px;color:#000;left:146px;transform:scaleX(0.9173);transform-origin:left center;-webkit-text-stroke:0.18px;">FC B</span>
<span class="t" style="top:242.41px;font-size:11.8px;line-height:14px;color:#000;left:168px;transform:scaleX(0.9165);transform-origin:left center;-webkit-text-stroke:0.18px;clip-path:inset(0 0 0 4px);">0001-00000001</span>
<span class="t" style="top:242.41px;font-size:11.8px;line-height:14px;color:#000;left:252px;transform:scaleX(0.8976);transform-origin:left center;-webkit-text-stroke:0.18px;">Responsable Monotributo 1</span>
<span class="t" style="top:255.41px;font-size:11.8px;line-height:14px;color:#000;left:71px;transform:scaleX(0.9745);transform-origin:left center;-webkit-text-stroke:0.18px;">27/04/2015</span>
<span class="t" style="top:255.41px;font-size:11.8px;line-height:14px;color:#000;left:146px;transform:scaleX(0.9173);transform-origin:left center;-webkit-text-stroke:0.18px;">FC B</span>
<span class="t" style="top:255.41px;font-size:11.8px;line-height:14px;color:#000;left:168px;transform:scaleX(0.9165);transform-origin:left center;-webkit-text-stroke:0.18px;clip-path:inset(0 0 0 4px);">0001-00000002</span>
<span class="t" style="top:255.41px;font-size:11.8px;line-height:14px;color:#000;left:252px;transform:scaleX(0.8976);transform-origin:left center;-webkit-text-stroke:0.18px;">Responsable Monotributo 1</span>
<span class="t" style="top:268.41px;font-size:11.8px;line-height:14px;color:#000;left:71px;transform:scaleX(0.9745);transform-origin:left center;-webkit-text-stroke:0.18px;">27/04/2015</span>
<span class="t" style="top:268.41px;font-size:11.8px;line-height:14px;color:#000;left:146px;transform:scaleX(0.9173);transform-origin:left center;-webkit-text-stroke:0.18px;">FC B</span>
<span class="t" style="top:268.41px;font-size:11.8px;line-height:14px;color:#000;left:168px;transform:scaleX(0.9165);transform-origin:left center;-webkit-text-stroke:0.18px;clip-path:inset(0 0 0 4px);">0001-00000004</span>
<span class="t" style="top:268.41px;font-size:11.8px;line-height:14px;color:#000;left:252px;transform:scaleX(0.8985);transform-origin:left center;-webkit-text-stroke:0.18px;">Responsable Exento 1</span>
<span class="t" style="top:281.41px;font-size:11.8px;line-height:14px;color:#000;left:71px;transform:scaleX(0.9745);transform-origin:left center;-webkit-text-stroke:0.18px;">27/04/2015</span>
<span class="t" style="top:281.41px;font-size:11.8px;line-height:14px;color:#000;left:146px;transform:scaleX(0.9173);transform-origin:left center;-webkit-text-stroke:0.18px;">FC B</span>
<span class="t" style="top:281.41px;font-size:11.8px;line-height:14px;color:#000;left:168px;transform:scaleX(0.9165);transform-origin:left center;-webkit-text-stroke:0.18px;clip-path:inset(0 0 0 4px);">0001-00000005</span>
<span class="t" style="top:281.41px;font-size:11.8px;line-height:14px;color:#000;left:252px;transform:scaleX(0.8985);transform-origin:left center;-webkit-text-stroke:0.18px;">Responsable Exento 1</span>
<span class="t" style="top:294.41px;font-size:11.8px;line-height:14px;color:#000;left:71px;transform:scaleX(0.9745);transform-origin:left center;-webkit-text-stroke:0.18px;">27/04/2015</span>
<span class="t" style="top:294.41px;font-size:11.8px;line-height:14px;color:#000;left:146px;transform:scaleX(0.9177);transform-origin:left center;-webkit-text-stroke:0.18px;">FC C</span>
<span class="t" style="top:294.41px;font-size:11.8px;line-height:14px;color:#000;left:168px;transform:scaleX(0.9165);transform-origin:left center;-webkit-text-stroke:0.18px;clip-path:inset(0 0 0 4px);">0001-00000003</span>
<span class="t" style="top:294.41px;font-size:11.8px;line-height:14px;color:#000;left:252px;transform:scaleX(0.8960);transform-origin:left center;-webkit-text-stroke:0.18px;">Consulmidor Final 1</span>
<span class="t" style="top:307.41px;font-size:11.8px;line-height:14px;color:#000;left:71px;transform:scaleX(0.9745);transform-origin:left center;-webkit-text-stroke:0.18px;">27/04/2015</span>
<span class="t" style="top:307.41px;font-size:11.8px;line-height:14px;color:#000;left:146px;transform:scaleX(0.9177);transform-origin:left center;-webkit-text-stroke:0.18px;">FC C</span>
<span class="t" style="top:307.41px;font-size:11.8px;line-height:14px;color:#000;left:168px;transform:scaleX(0.9165);transform-origin:left center;-webkit-text-stroke:0.18px;clip-path:inset(0 0 0 4px);">0001-00000006</span>
<span class="t" style="top:307.41px;font-size:11.8px;line-height:14px;color:#000;left:252px;transform:scaleX(0.8960);transform-origin:left center;-webkit-text-stroke:0.18px;">Consulmidor Final 1</span>
<div style="left:232px;top:503px;width:134px;height:23px;background:#f0f0f0;border-top:1px solid #fff;border-left:1px solid #fff;border-right:1px solid #696969;border-bottom:1px solid #696969;box-sizing:border-box;box-shadow:inset -1px -1px 0 #a0a0a0;"></div>
<span class="t" style="top:506.91px;font-size:11.8px;line-height:14px;color:#000;left:248.5px;transform:scaleX(0.8970);transform-origin:left center;-webkit-text-stroke:0.18px;">Cargar Cpte. Anulado</span>
<div style="left:57px;top:528px;width:760px;height:1px;background:#696969;"></div>
<div style="left:57px;top:529px;width:760px;height:1px;background:#fff;"></div>
<div style="left:58px;top:533px;width:77px;height:22px;background:#f0f0f0;border-top:1px solid #fff;border-left:1px solid #fff;border-right:1px solid #696969;border-bottom:1px solid #696969;box-sizing:border-box;box-shadow:inset -1px -1px 0 #a0a0a0;"></div>
<span class="t" style="top:536.41px;font-size:11.8px;line-height:14px;color:#000;left:85.5px;transform:scaleX(0.8694);transform-origin:left center;-webkit-text-stroke:0.18px;">E<u>x</u>portar</span>
<svg class="abs" style="left:61px;top:536px" width="16" height="13" viewBox="0 0 16 13"><rect x="0.500" y="0.500" width="10" height="11" fill="#fff" stroke="#9aa7b8"/><rect x="0.500" y="0.500" width="10" height="2.500" fill="#5b8fd0"/><path d="M0.500 6H10.500M0.500 9H10.500M4 3V11.500M7.500 3V11.500" stroke="#b8c4d4" stroke-width="0.800"/><path d="M7 7.500h5v-2.500l3.500 3.500-3.500 3.500v-2.500H7z" fill="#e0453a"/></svg>
<div style="left:354px;top:559px;width:90px;height:2px;background:#1d2a33;"></div>
<div style="left:444px;top:146px;width:743px;height:470px;background:linear-gradient(#9ab5d3 0,#bed4ec 24px,#dbe6f4 80px,#e8f0fa 100%);border-radius:6px 6px 0 0;border:1px solid #1f2730;box-sizing:border-box;box-shadow:inset 0 0 0 1px #a6e6fc;"></div>
<div style="left:446px;top:148px;width:739px;height:21px;background:linear-gradient(#9ab5d3,#bed4ec);border-radius:4px 4px 0 0;overflow:hidden;"><div style="left:-6px;top:3px;width:315px;height:16px;background:rgba(255,255,255,.35);filter:blur(5px);"></div></div>
<div style="left:450px;top:147px;width:731px;height:1px;background:#e6f2fc;"></div>
<div style="left:451px;top:169px;width:733px;height:445px;background:#f0f0f0;"></div>
<svg class="abs" style="left:450px;top:151.5px" width="16" height="14" viewBox="0 0 16 14">
<path d="M0.500 0V12.500H15.500" stroke="#7d8c94" stroke-width="1" fill="none"/>
<rect x="1.300" y="0.500" width="2.700" height="12" fill="#8a163e"/><rect x="5.200" y="3" width="2.600" height="9.500" fill="#7a1238"/><rect x="8.700" y="1" width="2.700" height="11.500" fill="#8a163e"/><rect x="12.300" y="4" width="2.700" height="8.500" fill="#7a1446"/>
<path d="M1 11L5 6.500 8 3.800 10.500 5.500 13.500 3.800" stroke="#f2c230" stroke-width="1.500" fill="none"/></svg>
<span class="t" style="top:151.67px;font-size:12.5px;line-height:15px;color:#10151c;left:469px;letter-spacing:-0.25px;">Actualizando un registro de Comprobante de Ventas</span>
<div style="left:1152px;top:151px;width:30px;height:16px;background:linear-gradient(#c9dcf2,#b9d0ec 45%,#a9c4e6 50%,#b9d2ef);border:1px solid #8ba7c9;border-radius:3px;box-sizing:border-box;box-shadow:inset 0 0 0 1px rgba(255,255,255,.6);"></div>
<svg class="abs" style="left:1160.0px;top:154.0px" width="14" height="10" viewBox="0 0 14 10"><path d="M1.500 1h3l2.500 2.200L9.500 1h3L8.800 5l3.700 4h-3L7 6.800 4.500 9h-3L5.200 5z" fill="#fff" stroke="#4a5564" stroke-width="1"/></svg>
<div style="left:452px;top:171px;width:134px;height:22px;border-left:1px solid #fff;border-top:1px solid #fff;border-right:2px solid #696969;box-sizing:border-box;background:#f0f0f0;"></div>
<span class="t" style="top:173.91px;font-size:11.8px;line-height:14px;color:#000;left:456.5px;transform:scaleX(0.8941);transform-origin:left center;-webkit-text-stroke:0.18px;">Datos de Cliente y Detalle</span>
<div style="left:586px;top:173px;width:59px;height:19px;border-top:1px solid #fff;border-right:2px solid #696969;box-sizing:border-box;"></div>
<span class="t" style="top:175.41px;font-size:11.8px;line-height:14px;color:#000;left:589px;transform:scaleX(0.8542);transform-origin:left center;-webkit-text-stroke:0.18px;">Control SD</span>
<div style="left:586px;top:192px;width:590px;height:1px;background:#fff;"></div>
<div style="left:452px;top:193px;width:1px;height:389px;background:#fff;"></div>
<div style="left:1175px;top:191px;width:1px;height:392px;background:#696969;"></div>
<div style="left:452px;top:582px;width:724px;height:1px;background:#696969;"></div>
<div style="left:1174px;top:192px;width:1px;height:390px;background:#a0a0a0;"></div>
<div style="left:453px;top:581px;width:722px;height:1px;background:#a0a0a0;"></div>
<div style="left:1107px;top:171px;width:13px;height:13px;background:#fff;border-top:1px solid #a0a0a0;border-left:1px solid #a0a0a0;border-right:1px solid #fff;border-bottom:1px solid #fff;box-sizing:border-box;box-shadow:inset 1px 1px 0 #696969,inset -1px -1px 0 #e3e3e3;"></div>
<span class="t" style="top:170.41px;font-size:11.8px;line-height:14px;color:#000;left:1125px;transform:scaleX(0.9322);transform-origin:left center;-webkit-text-stroke:0.18px;">Inactivo</span>
<div style="left:455px;top:196px;width:713px;height:89px;border:1px solid #a0a0a0;box-sizing:border-box;box-shadow:inset 1px 1px 0 #fff, 1px 1px 0 #fff;"></div>
<span class="t" style="top:202.41px;font-size:11.8px;line-height:14px;color:#000;left:458.5px;transform:scaleX(0.8989);transform-origin:left center;-webkit-text-stroke:0.18px;">Fecha:</span>
<div style="left:494px;top:202px;width:77px;height:17px;background:#ffffc4;border-top:1px solid #a0a0a0;border-left:1px solid #a0a0a0;border-right:1px solid #fff;border-bottom:1px solid #fff;box-sizing:border-box;box-shadow:inset 1px 1px 0 #696969,inset -1px -1px 0 #e3e3e3;"></div>
<div style="left:497px;top:205px;width:59px;height:12px;background:#3399ff;"></div>
<span class="t" style="top:203.41px;font-size:11.8px;line-height:14px;color:#fff;left:497.5px;transform:scaleX(0.9830);transform-origin:left center;-webkit-text-stroke:0.18px;">27/04/2015</span>
<svg class="abs" style="left:578px;top:201px" width="16" height="16" viewBox="0 0 16 16"><rect x="1" y="2" width="14" height="13.500" fill="#fff" stroke="#b0b8c4" stroke-width="0.600"/><rect x="0.500" y="1.500" width="15" height="3.500" fill="#2f4f78"/><path d="M3.500 0v3M12.500 0v3" stroke="#2f4f78" stroke-width="1.500"/><g fill="#8a95a5"><rect x="2.500" y="6.500" width="2" height="2"/><rect x="5.500" y="6.500" width="2" height="2"/><rect x="8.500" y="6.500" width="2" height="2"/><rect x="2.500" y="9.500" width="2" height="2"/><rect x="5.500" y="9.500" width="2" height="2"/><rect x="8.500" y="9.500" width="2" height="2"/><rect x="2.500" y="12.500" width="2" height="2"/><rect x="5.500" y="12.500" width="2" height="2"/><rect x="8.500" y="12.500" width="2" height="2"/></g><g fill="#d05050"><rect x="11.500" y="6.500" width="2" height="2"/><rect x="11.500" y="9.500" width="2" height="2"/><rect x="11.500" y="12.500" width="2" height="2"/></g></svg>
<span class="t" style="top:202.41px;font-size:11.8px;line-height:14px;color:#000;left:627px;transform:scaleX(0.8922);transform-origin:left center;-webkit-text-stroke:0.18px;">Cliente:</span>
<div style="left:665px;top:202px;width:47px;height:17px;background:#ffffc4;border-top:1px solid #a0a0a0;border-left:1px solid #a0a0a0;border-right:1px solid #fff;border-bottom:1px solid #fff;box-sizing:border-box;box-shadow:inset 1px 1px 0 #696969,inset -1px -1px 0 #e3e3e3;"></div>
<span class="t" style="top:203.41px;font-size:11.8px;line-height:14px;color:#000;left:307.5px;width:400px;text-align:right;transform:scaleX(0.9322);transform-origin:right center;-webkit-text-stroke:0.18px;">4</span>
<svg class="abs" style="left:719.5px;top:202.0px" width="15" height="15" viewBox="0 0 15 15"><circle cx="7.500" cy="7.500" r="7" fill="#3f8be0"/><circle cx="7.500" cy="7.500" r="6" fill="none" stroke="#7db4f0" stroke-width="1"/><text x="7.500" y="11.500" font-size="11" font-weight="bold" font-family="Liberation Sans, sans-serif" text-anchor="middle" fill="#fff">?</text></svg>
<span class="t" style="top:202.41px;font-size:11.8px;line-height:14px;color:#000;left:742px;transform:scaleX(0.9322);transform-origin:left center;-webkit-text-stroke:0.18px;">F2</span>
<span class="t" style="top:198.41px;font-size:11.8px;line-height:14px;color:#000;left:762px;transform:scaleX(0.8959);transform-origin:left center;-webkit-text-stroke:0.18px;">Responsable Inscripto 1</span>
<span class="t" style="top:208.41px;font-size:11.8px;line-height:14px;color:#000;left:762px;transform:scaleX(0.8941);transform-origin:left center;-webkit-text-stroke:0.18px;">Domicilio 3</span>
<span class="t" style="top:218.41px;font-size:11.8px;line-height:14px;color:#000;left:762px;transform:scaleX(0.9160);transform-origin:left center;-webkit-text-stroke:0.18px;">00-00000000-0</span>
<span class="t" style="top:208.41px;font-size:11.8px;line-height:14px;color:#000;left:891px;transform:scaleX(0.9043);transform-origin:left center;-webkit-text-stroke:0.18px;">FIRMAT</span>
<span class="t" style="top:218.41px;font-size:11.8px;line-height:14px;color:#000;left:855px;transform:scaleX(0.8962);transform-origin:left center;-webkit-text-stroke:0.18px;">Responsable Inscripto</span>
<span class="t" style="top:202.41px;font-size:11.8px;line-height:14px;color:#000;left:1041px;transform:scaleX(0.9161);transform-origin:left center;-webkit-text-stroke:0.18px;">Remito</span>
<div style="left:1079px;top:202px;width:83px;height:17px;background:#fff;border-top:1px solid #a0a0a0;border-left:1px solid #a0a0a0;border-right:1px solid #fff;border-bottom:1px solid #fff;box-sizing:border-box;box-shadow:inset 1px 1px 0 #696969,inset -1px -1px 0 #e3e3e3;"></div>
<span class="t" style="top:203.41px;font-size:11.8px;line-height:14px;color:#000;left:1083px;transform:scaleX(0.9165);transform-origin:left center;-webkit-text-stroke:0.18px;">0000-00000000</span>
<span class="t" style="top:228.41px;font-size:11.8px;line-height:14px;color:#000;left:458.5px;transform:scaleX(0.8967);transform-origin:left center;-webkit-text-stroke:0.18px;">Cpte:</span>
<div style="left:494px;top:228px;width:60px;height:17px;background:#ffffc4;border-top:1px solid #a0a0a0;border-left:1px solid #a0a0a0;border-right:1px solid #fff;border-bottom:1px solid #fff;box-sizing:border-box;box-shadow:inset 1px 1px 0 #696969,inset -1px -1px 0 #e3e3e3;"></div>
<span class="t" style="top:229.41px;font-size:11.8px;line-height:14px;color:#000;left:497.5px;transform:scaleX(0.9322);transform-origin:left center;-webkit-text-stroke:0.18px;">FC</span>
<div style="left:540px;top:230px;width:12px;height:13px;background:#f0f0f0;border-top:1px solid #fff;border-left:1px solid #fff;border-right:1px solid #404040;border-bottom:1px solid #404040;box-sizing:border-box;"><svg style="position:absolute;left:2px;top:4px" width="7" height="4" viewBox="0 0 7 4"><path d="M0 0h7L3.500 4z" fill="#000"/></svg></div>
<span class="t" style="top:230.69px;font-size:11px;line-height:13px;color:#000;left:561px;font-weight:bold;">A</span>
<div style="left:579px;top:228px;width:98px;height:17px;background:#ffffc4;border-top:1px solid #a0a0a0;border-left:1px solid #a0a0a0;border-right:1px solid #fff;border-bottom:1px solid #fff;box-sizing:border-box;box-shadow:inset 1px 1px 0 #696969,inset -1px -1px 0 #e3e3e3;"></div>
<span class="t" style="top:229.41px;font-size:11.8px;line-height:14px;color:#000;left:583px;transform:scaleX(0.9165);transform-origin:left center;-webkit-text-stroke:0.18px;">0001-00000002</span>
<span class="t" style="top:247.41px;font-size:11.8px;line-height:14px;color:#000;left:458.5px;transform:scaleX(0.8972);transform-origin:left center;-webkit-text-stroke:0.18px;">Condición de Pago:</span>
<div style="left:556px;top:247px;width:46px;height:17px;background:#ffffc4;border-top:1px solid #a0a0a0;border-left:1px solid #a0a0a0;border-right:1px solid #fff;border-bottom:1px solid #fff;box-sizing:border-box;box-shadow:inset 1px 1px 0 #696969,inset -1px -1px 0 #e3e3e3;"></div>
<span class="t" style="top:248.41px;font-size:11.8px;line-height:14px;color:#000;left:199.5px;width:400px;text-align:right;transform:scaleX(0.9322);transform-origin:right center;-webkit-text-stroke:0.18px;">3</span>
<svg class="abs" style="left:610.5px;top:247.5px" width="15" height="15" viewBox="0 0 15 15"><circle cx="7.500" cy="7.500" r="7" fill="#3f8be0"/><circle cx="7.500" cy="7.500" r="6" fill="none" stroke="#7db4f0" stroke-width="1"/><text x="7.500" y="11.500" font-size="11" font-weight="bold" font-family="Liberation Sans, sans-serif" text-anchor="middle" fill="#fff">?</text></svg>
<span class="t" style="top:247.41px;font-size:11.8px;line-height:14px;color:#000;left:633px;transform:scaleX(0.9322);transform-origin:left center;-webkit-text-stroke:0.18px;">F3</span>
<span class="t" style="top:247.41px;font-size:11.8px;line-height:14px;color:#000;left:651px;transform:scaleX(0.8962);transform-origin:left center;-webkit-text-stroke:0.18px;">Cuenta Corriente 30 Dias</span>
<span class="t" style="top:267.41px;font-size:11.8px;line-height:14px;color:#000;left:458.5px;transform:scaleX(0.8987);transform-origin:left center;-webkit-text-stroke:0.18px;">Vendedor:</span>
<div style="left:556px;top:267px;width:46px;height:17px;background:#ffffc4;border-top:1px solid #a0a0a0;border-left:1px solid #a0a0a0;border-right:1px solid #fff;border-bottom:1px solid #fff;box-sizing:border-box;box-shadow:inset 1px 1px 0 #696969,inset -1px -1px 0 #e3e3e3;"></div>
<span class="t" style="top:268.41px;font-size:11.8px;line-height:14px;color:#000;left:199px;width:400px;text-align:right;transform:scaleX(0.9322);transform-origin:right center;-webkit-text-stroke:0.18px;">1</span>
<svg class="abs" style="left:610.5px;top:267.0px" width="15" height="15" viewBox="0 0 15 15"><circle cx="7.500" cy="7.500" r="7" fill="#3f8be0"/><circle cx="7.500" cy="7.500" r="6" fill="none" stroke="#7db4f0" stroke-width="1"/><text x="7.500" y="11.500" font-size="11" font-weight="bold" font-family="Liberation Sans, sans-serif" text-anchor="middle" fill="#fff">?</text></svg>
<span class="t" style="top:266.41px;font-size:11.8px;line-height:14px;color:#000;left:633px;transform:scaleX(0.9322);transform-origin:left center;-webkit-text-stroke:0.18px;">F4</span>
<span class="t" style="top:263.41px;font-size:11.8px;line-height:14px;color:#000;left:651px;transform:scaleX(0.8983);transform-origin:left center;-webkit-text-stroke:0.18px;">Cobrador 1</span>
<span class="t" style="top:244.41px;font-size:11.8px;line-height:14px;color:#000;left:963px;transform:scaleX(0.8972);transform-origin:left center;-webkit-text-stroke:0.18px;">Usuario: Admin</span>
<div style="left:1014px;top:261px;width:149px;height:20px;background:#f0f0f0;border-top:1px solid #fff;border-left:1px solid #fff;border-right:1px solid #696969;border-bottom:1px solid #696969;box-sizing:border-box;box-shadow:inset -1px -1px 0 #a0a0a0;"></div>
<span class="t" style="top:263.41px;font-size:11.8px;line-height:14px;color:#000;left:1038px;transform:scaleX(0.8941);transform-origin:left center;-webkit-text-stroke:0.18px;">Confirmar Encabezado</span>
<svg class="abs" style="left:1016.5px;top:263.3px" width="15" height="15" viewBox="0 0 15 15"><circle cx="7.500" cy="7.500" r="7.200" fill="#3fbe8f"/><path d="M3.800 7.800l2.600 2.600 4.800-5" fill="none" stroke="#fff" stroke-width="2"/></svg>
<span class="t" style="top:289.41px;font-size:11.8px;line-height:14px;color:#000;left:459px;transform:scaleX(0.8932);transform-origin:left center;-webkit-text-stroke:0.18px;">Dir. de Entrega:</span>
<div style="left:536px;top:289px;width:42px;height:17px;background:#fff;border-top:1px solid #a0a0a0;border-left:1px solid #a0a0a0;border-right:1px solid #fff;border-bottom:1px solid #fff;box-sizing:border-box;box-shadow:inset 1px 1px 0 #696969,inset -1px -1px 0 #e3e3e3;"></div>
<span class="t" style="top:290.41px;font-size:11.8px;line-height:14px;color:#000;left:175px;width:400px;text-align:right;transform:scaleX(0.9322);transform-origin:right center;-webkit-text-stroke:0.18px;">0</span>
<svg class="abs" style="left:582.0px;top:289.0px" width="15" height="15" viewBox="0 0 15 15"><circle cx="7.500" cy="7.500" r="7" fill="#3f8be0"/><circle cx="7.500" cy="7.500" r="6" fill="none" stroke="#7db4f0" stroke-width="1"/><text x="7.500" y="11.500" font-size="11" font-weight="bold" font-family="Liberation Sans, sans-serif" text-anchor="middle" fill="#fff">?</text></svg>
<span class="t" style="top:288.41px;font-size:11.8px;line-height:14px;color:#000;left:604px;transform:scaleX(0.9322);transform-origin:left center;-webkit-text-stroke:0.18px;">F5</span>
<div style="left:1035px;top:291px;width:13px;height:13px;background:#fff;border-top:1px solid #a0a0a0;border-left:1px solid #a0a0a0;border-right:1px solid #fff;border-bottom:1px solid #fff;box-sizing:border-box;box-shadow:inset 1px 1px 0 #696969,inset -1px -1px 0 #e3e3e3;"></div>
<span class="t" style="top:290.41px;font-size:11.8px;line-height:14px;color:#000;left:1053.5px;transform:scaleX(0.8786);transform-origin:left center;-webkit-text-stroke:0.18px;">Flete a Cargo del Cliente</span>
<span class="t" style="top:307.41px;font-size:11.8px;line-height:14px;color:#000;left:459px;transform:scaleX(0.8952);transform-origin:left center;-webkit-text-stroke:0.18px;">Descripción:</span>
<div style="left:536px;top:309px;width:616px;height:17px;background:#ffffc4;border-top:1px solid #a0a0a0;border-left:1px solid #a0a0a0;border-right:1px solid #fff;border-bottom:1px solid #fff;box-sizing:border-box;box-shadow:inset 1px 1px 0 #696969,inset -1px -1px 0 #e3e3e3;"></div>
<span class="t" style="top:310.41px;font-size:11.8px;line-height:14px;color:#000;left:540px;transform:scaleX(0.9147);transform-origin:left center;-webkit-text-stroke:0.18px;">Venta 2</span>
<div style="left:455px;top:334px;width:717px;height:140px;border:1px solid #a0a0a0;border-bottom:none;box-sizing:border-box;box-shadow:inset 1px 1px 0 #fff, 1px 0 0 #fff;"></div>
<span class="t" style="top:340.41px;font-size:11.8px;line-height:14px;color:#000;left:462.5px;transform:scaleX(0.8992);transform-origin:left center;-webkit-text-stroke:0.18px;">Gravado:</span>
<div style="left:563px;top:340px;width:79px;height:17px;background:#fff;border-top:1px solid #a0a0a0;border-left:1px solid #a0a0a0;border-right:1px solid #fff;border-bottom:1px solid #fff;box-sizing:border-box;box-shadow:inset 1px 1px 0 #696969,inset -1px -1px 0 #e3e3e3;"></div>
<span class="t" style="top:361.41px;font-size:11.8px;line-height:14px;color:#000;left:462.5px;transform:scaleX(0.8992);transform-origin:left center;-webkit-text-stroke:0.18px;">Gravado:</span>
<div style="left:563px;top:361px;width:79px;height:17px;background:#fff;border-top:1px solid #a0a0a0;border-left:1px solid #a0a0a0;border-right:1px solid #fff;border-bottom:1px solid #fff;box-sizing:border-box;box-shadow:inset 1px 1px 0 #696969,inset -1px -1px 0 #e3e3e3;"></div>
<span class="t" style="top:379.41px;font-size:11.8px;line-height:14px;color:#000;left:462.5px;transform:scaleX(0.8992);transform-origin:left center;-webkit-text-stroke:0.18px;">Gravado:</span>
<div style="left:563px;top:379px;width:79px;height:17px;background:#fff;border-top:1px solid #a0a0a0;border-left:1px solid #a0a0a0;border-right:1px solid #fff;border-bottom:1px solid #fff;box-sizing:border-box;box-shadow:inset 1px 1px 0 #696969,inset -1px -1px 0 #e3e3e3;"></div>
<span class="t" style="top:400.41px;font-size:11.8px;line-height:14px;color:#000;left:462.5px;transform:scaleX(0.8992);transform-origin:left center;-webkit-text-stroke:0.18px;">Gravado:</span>
<div style="left:563px;top:400px;width:79px;height:17px;background:#fff;border-top:1px solid #a0a0a0;border-left:1px solid #a0a0a0;border-right:1px solid #fff;border-bottom:1px solid #fff;box-sizing:border-box;box-shadow:inset 1px 1px 0 #696969,inset -1px -1px 0 #e3e3e3;"></div>
<span class="t" style="top:418.41px;font-size:11.8px;line-height:14px;color:#000;left:462.5px;transform:scaleX(0.8974);transform-origin:left center;-webkit-text-stroke:0.18px;">Exentos:</span>
<div style="left:563px;top:418px;width:79px;height:17px;background:#fff;border-top:1px solid #a0a0a0;border-left:1px solid #a0a0a0;border-right:1px solid #fff;border-bottom:1px solid #fff;box-sizing:border-box;box-shadow:inset 1px 1px 0 #696969,inset -1px -1px 0 #e3e3e3;"></div>
<span class="t" style="top:340.91px;font-size:11.8px;line-height:14px;color:#000;left:238px;width:400px;text-align:right;transform:scaleX(0.9322);transform-origin:right center;-webkit-text-stroke:0.18px;">$700.00</span>
<span class="t" style="top:361.91px;font-size:11.8px;line-height:14px;color:#000;left:238px;width:400px;text-align:right;transform:scaleX(0.9322);transform-origin:right center;-webkit-text-stroke:0.18px;">$0.00</span>
<span class="t" style="top:379.91px;font-size:11.8px;line-height:14px;color:#000;left:238px;width:400px;text-align:right;transform:scaleX(0.9322);transform-origin:right center;-webkit-text-stroke:0.18px;">$0.00</span>
<span class="t" style="top:400.91px;font-size:11.8px;line-height:14px;color:#000;left:238px;width:400px;text-align:right;transform:scaleX(0.9322);transform-origin:right center;-webkit-text-stroke:0.18px;">$0.00</span>
<span class="t" style="top:418.91px;font-size:11.8px;line-height:14px;color:#000;left:238px;width:400px;text-align:right;transform:scaleX(0.9322);transform-origin:right center;-webkit-text-stroke:0.18px;">$0.00</span>
<div style="left:651px;top:346px;width:520px;height:112px;border:1px solid #a0a0a0;box-sizing:border-box;box-shadow:inset 1px 1px 0 #fff, 1px 1px 0 #fff;"></div>
<div style="left:658px;top:340px;width:42px;height:12px;background:#f0f0f0;"></div>
<span class="t" style="top:338.41px;font-size:11.8px;line-height:14px;color:#000;left:660px;transform:scaleX(0.9125);transform-origin:left center;-webkit-text-stroke:0.18px;">Totales:</span>
<span class="t" style="top:351.41px;font-size:11.8px;line-height:14px;color:#000;left:660px;transform:scaleX(0.9157);transform-origin:left center;-webkit-text-stroke:0.18px;">Monto Gravado:</span>
<span class="t" style="top:352.41px;font-size:11.8px;line-height:14px;color:#000;left:446px;width:400px;text-align:right;transform:scaleX(0.9322);transform-origin:right center;-webkit-text-stroke:0.18px;">$700.00</span>
<span class="t" style="top:371.41px;font-size:11.8px;line-height:14px;color:#000;left:660px;transform:scaleX(0.9151);transform-origin:left center;-webkit-text-stroke:0.18px;">Monto Exentos:</span>
<span class="t" style="top:372.41px;font-size:11.8px;line-height:14px;color:#000;left:446px;width:400px;text-align:right;transform:scaleX(0.9322);transform-origin:right center;-webkit-text-stroke:0.18px;">$0.00</span>
<div style="left:653px;top:391px;width:204px;height:1px;background:#000;"></div>
<span class="t" style="top:395.41px;font-size:11.8px;line-height:14px;color:#000;left:660px;transform:scaleX(0.9162);transform-origin:left center;-webkit-text-stroke:0.18px;">Descuento</span>
<div style="left:716px;top:395px;width:47px;height:16px;background:#fff;border-top:1px solid #a0a0a0;border-left:1px solid #a0a0a0;border-right:1px solid #fff;border-bottom:1px solid #fff;box-sizing:border-box;box-shadow:inset 1px 1px 0 #696969,inset -1px -1px 0 #e3e3e3;"></div>
<span class="t" style="top:395.91px;font-size:11.8px;line-height:14px;color:#000;left:358px;width:400px;text-align:right;transform:scaleX(0.9322);transform-origin:right center;-webkit-text-stroke:0.18px;">0.00</span>
<span class="t" style="top:396.41px;font-size:11.8px;line-height:14px;color:#000;left:446px;width:400px;text-align:right;transform:scaleX(0.9322);transform-origin:right center;-webkit-text-stroke:0.18px;">$0.00</span>
<span class="t" style="top:414.41px;font-size:11.8px;line-height:14px;color:#000;left:660px;transform:scaleX(0.9155);transform-origin:left center;-webkit-text-stroke:0.18px;">Recargo:</span>
<div style="left:716px;top:414px;width:47px;height:16px;background:#fff;border-top:1px solid #a0a0a0;border-left:1px solid #a0a0a0;border-right:1px solid #fff;border-bottom:1px solid #fff;box-sizing:border-box;box-shadow:inset 1px 1px 0 #696969,inset -1px -1px 0 #e3e3e3;"></div>
<span class="t" style="top:415.41px;font-size:11.8px;line-height:14px;color:#000;left:358px;width:400px;text-align:right;transform:scaleX(0.9322);transform-origin:right center;-webkit-text-stroke:0.18px;">0.00</span>
<span class="t" style="top:415.41px;font-size:11.8px;line-height:14px;color:#000;left:446px;width:400px;text-align:right;transform:scaleX(0.9322);transform-origin:right center;-webkit-text-stroke:0.18px;">$0.00</span>
<div style="left:855px;top:349px;width:1px;height:78px;background:#000;"></div>
<span class="t" style="top:351.41px;font-size:11.8px;line-height:14px;color:#000;left:864px;transform:scaleX(0.9141);transform-origin:left center;-webkit-text-stroke:0.18px;">Monto Subtotal:</span>
<span class="t" style="top:352.41px;font-size:11.8px;line-height:14px;color:#000;left:662px;width:400px;text-align:right;transform:scaleX(0.9322);transform-origin:right center;-webkit-text-stroke:0.18px;">$700.00</span>
<span class="t" style="top:371.41px;font-size:11.8px;line-height:14px;color:#000;left:864px;transform:scaleX(0.9126);transform-origin:left center;-webkit-text-stroke:0.18px;">Monto IVA Inscr..:</span>
<span class="t" style="top:372.41px;font-size:11.8px;line-height:14px;color:#000;left:662px;width:400px;text-align:right;transform:scaleX(0.9322);transform-origin:right center;-webkit-text-stroke:0.18px;">$0.00</span>
<span class="t" style="top:390.41px;font-size:11.8px;line-height:14px;color:#000;left:861px;transform:scaleX(0.9131);transform-origin:left center;-webkit-text-stroke:0.18px;">Monto IVA No Inscr..:</span>
<span class="t" style="top:391.41px;font-size:11.8px;line-height:14px;color:#000;left:662px;width:400px;text-align:right;transform:scaleX(0.9322);transform-origin:right center;-webkit-text-stroke:0.18px;">$0.00</span>
<div style="left:858px;top:412px;width:215px;height:1px;background:#000;"></div>
<span class="t" style="top:417.50px;font-size:13px;line-height:16px;color:#000;left:871px;letter-spacing:0.8px;font-weight:bold;">Total:</span>
<span class="t" style="top:417.50px;font-size:13px;line-height:16px;color:#000;left:658px;width:400px;text-align:right;letter-spacing:0.6px;font-weight:bold;">$700.00</span>
<div style="left:1077px;top:352px;width:87px;height:78px;background:#f0f0f0;border-top:1px solid #fff;border-left:1px solid #fff;border-right:1px solid #696969;border-bottom:1px solid #696969;box-sizing:border-box;box-shadow:inset -1px -1px 0 #a0a0a0;"></div>
<span class="t" style="top:377.41px;font-size:11.8px;line-height:14px;color:#a0a0a0;left:1091px;transform:scaleX(0.8604);transform-origin:left center;-webkit-text-stroke:0.18px;">Cerrar</span>
<span class="t" style="top:390.41px;font-size:11.8px;line-height:14px;color:#a0a0a0;left:1091px;transform:scaleX(0.8860);transform-origin:left center;-webkit-text-stroke:0.18px;">Comprobante</span>
<div style="left:455px;top:469px;width:712px;height:107px;background:#f0f0f0;border:1px solid #a0a0a0;box-sizing:border-box;box-shadow:inset 1px 1px 0 #fff, 1px 1px 0 #fff;"></div>
<div style="left:461px;top:463px;width:36px;height:12px;background:#f0f0f0;"></div>
<span class="t" style="top:462.41px;font-size:11.8px;line-height:14px;color:#000;left:464px;transform:scaleX(0.9146);transform-origin:left center;-webkit-text-stroke:0.18px;">Notas:</span>
<div style="left:460px;top:480px;width:703px;height:89px;background:#fff;border-top:1px solid #a0a0a0;border-left:1px solid #a0a0a0;border-right:1px solid #fff;border-bottom:1px solid #fff;box-sizing:border-box;box-shadow:inset 1px 1px 0 #696969,inset -1px -1px 0 #e3e3e3;"></div>
<div style="left:1005px;top:589px;width:81px;height:20px;border:1px solid #2e2e2e;box-sizing:border-box;background:#f0f0f0;"></div>
<div style="left:1006px;top:590px;width:79px;height:18px;background:#f0f0f0;border-top:1px solid #fff;border-left:1px solid #fff;border-right:1px solid #696969;border-bottom:1px solid #696969;box-sizing:border-box;box-shadow:inset -1px -1px 0 #a0a0a0;"></div>
<svg class="abs" style="left:1007.7px;top:591.5px" width="15" height="15" viewBox="0 0 15 15"><circle cx="7.500" cy="7.500" r="7.200" fill="#3fbe8f"/><path d="M3.800 7.800l2.600 2.600 4.800-5" fill="none" stroke="#fff" stroke-width="2"/></svg>
<span class="t" style="top:591.41px;font-size:11.8px;line-height:14px;color:#000;left:1029.5px;transform:scaleX(0.9322);transform-origin:left center;-webkit-text-stroke:0.18px;"><u>O</u>K</span>
<div style="left:1092px;top:589px;width:81px;height:20px;background:#f0f0f0;border-top:1px solid #fff;border-left:1px solid #fff;border-right:1px solid #696969;border-bottom:1px solid #696969;box-sizing:border-box;box-shadow:inset -1px -1px 0 #a0a0a0;"></div>
<svg class="abs" style="left:1094.5px;top:591.5px" width="15" height="15" viewBox="0 0 15 15"><circle cx="7.500" cy="7.500" r="7.200" fill="#e2465c"/><path d="M4.500 4.500l6 6M10.500 4.500l-6 6" fill="none" stroke="#fff" stroke-width="2"/></svg>
<span class="t" style="top:591.41px;font-size:11.8px;line-height:14px;color:#000;left:1116.5px;transform:scaleX(0.9153);transform-origin:left center;-webkit-text-stroke:0.18px;">Cancelar</span>
</body></html>
